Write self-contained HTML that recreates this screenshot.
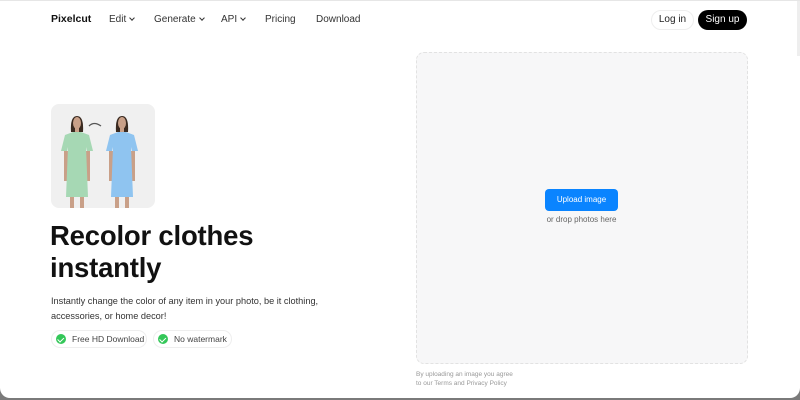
<!DOCTYPE html>
<html><head><style>
*{margin:0;padding:0;box-sizing:border-box}
body{width:800px;height:400px;background:#7a7a7a;font-family:"Liberation Sans",sans-serif;overflow:hidden;position:relative}
.win{position:absolute;left:0;top:0;width:800px;height:398px;background:#fff;border-radius:0 0 10px 10px;border-top:1px solid #e6e6e6}
.a{position:absolute;white-space:nowrap}
.nav{font-size:10px;color:#333;top:13px}
.chev{display:inline-block;width:4px;height:4px;border-right:1.2px solid #333;border-bottom:1.2px solid #333;transform:rotate(45deg);margin-left:4px;position:relative;top:-2px}
.chip{position:absolute;top:329px;height:18px;border:1px solid #eee;border-radius:9px;font-size:8.5px;color:#444;padding-left:20px;line-height:16px}
.chip i{position:absolute;left:4px;top:3px;width:10px;height:10px;border-radius:50%;background:#34c759}
.chip i:after{content:"";position:absolute;left:3.3px;top:2px;width:2.5px;height:4.5px;border-right:1.3px solid #fff;border-bottom:1.3px solid #fff;transform:rotate(45deg)}
</style></head><body>
<div class="win">
<div class="a" style="left:51px;top:12px;font-size:10.5px;font-weight:bold;color:#111">Pixelcut</div>
<div class="a nav" style="left:109px">Edit<span class="chev"></span></div>
<div class="a nav" style="left:154px">Generate<span class="chev"></span></div>
<div class="a nav" style="left:221px">API<span class="chev"></span></div>
<div class="a nav" style="left:265px">Pricing</div>
<div class="a nav" style="left:316px">Download</div>
<div class="a" style="left:651px;top:9px;width:43px;height:20px;border:1px solid #eee;border-radius:10px;font-size:10px;text-align:center;line-height:18px;color:#222">Log in</div>
<div class="a" style="left:698px;top:9px;width:49px;height:20px;background:#000;border-radius:10px;font-size:10px;text-align:center;line-height:20px;color:#fff">Sign up</div>

<div class="a" style="left:51px;top:103px;width:104px;height:104px;border-radius:8px;background:#f0f0f0;overflow:hidden">
<svg width="104" height="104" viewBox="0 0 104 104">
<g>
<path d="M20 28 q-1 -16 6 -16 q7 0 6 16z" fill="#3a2a20"/>
<ellipse cx="26" cy="19" rx="4" ry="6" fill="#c9a088"/>
<rect x="24" y="24" width="4" height="6" fill="#c9a088"/>
<rect x="13" y="47" width="4" height="30" fill="#c9a088"/>
<rect x="35" y="47" width="4" height="30" fill="#c9a088"/>
<rect x="19" y="93" width="4" height="11" fill="#c9a088"/>
<rect x="29" y="93" width="4" height="11" fill="#c9a088"/>
<path d="M14 31 l8 -3 h8 l8 3 l4 16 h-6 l-1 -4 l2 50 h-22 l2 -50 l-1 4 h-6z" fill="#a6d8b4"/>
</g>
<g transform="translate(45 0)">
<path d="M20 28 q-1 -16 6 -16 q7 0 6 16z" fill="#3a2a20"/>
<ellipse cx="26" cy="19" rx="4" ry="6" fill="#c9a088"/>
<rect x="24" y="24" width="4" height="6" fill="#c9a088"/>
<rect x="13" y="47" width="4" height="30" fill="#c9a088"/>
<rect x="35" y="47" width="4" height="30" fill="#c9a088"/>
<rect x="19" y="93" width="4" height="11" fill="#c9a088"/>
<rect x="29" y="93" width="4" height="11" fill="#c9a088"/>
<path d="M14 31 l8 -3 h8 l8 3 l4 16 h-6 l-1 -4 l2 50 h-22 l2 -50 l-1 4 h-6z" fill="#8fc4f0"/>
</g>
<path d="M38 22 q5 -5 12 0" stroke="#555" stroke-width="1.3" fill="none"/>
</svg></div>

<div class="a" style="left:50px;top:219px;font-size:27.5px;font-weight:bold;color:#111;line-height:32px;letter-spacing:-0.2px">Recolor clothes<br>instantly</div>
<div class="a" style="left:51px;top:293px;font-size:9.2px;color:#333;line-height:14.5px">Instantly change the color of any item in your photo, be it clothing,<br>accessories, or home decor!</div>
<div class="chip" style="left:51px;width:96px"><i></i>Free HD Download</div>
<div class="chip" style="left:153px;width:79px"><i></i>No watermark</div>

<div class="a" style="left:416px;top:51px;width:332px;height:312px;background:#f7f7f8;border:1px dashed #e2e2e2;border-radius:8px"></div>
<div class="a" style="left:545px;top:188px;width:73px;height:22px;background:#0a84ff;border-radius:4px;color:#fff;font-size:8px;text-align:center;line-height:22px">Upload image</div>
<div class="a" style="left:545px;top:214px;width:73px;text-align:center;font-size:8px;color:#666">or drop photos here</div>
<div class="a" style="left:416px;top:369px;font-size:6.5px;color:#999;line-height:9px">By uploading an image you agree<br>to our Terms and Privacy Policy</div>
<div class="a" style="left:797px;top:0;width:3px;height:55px;background:#eee"></div>
</div>
</body></html>
